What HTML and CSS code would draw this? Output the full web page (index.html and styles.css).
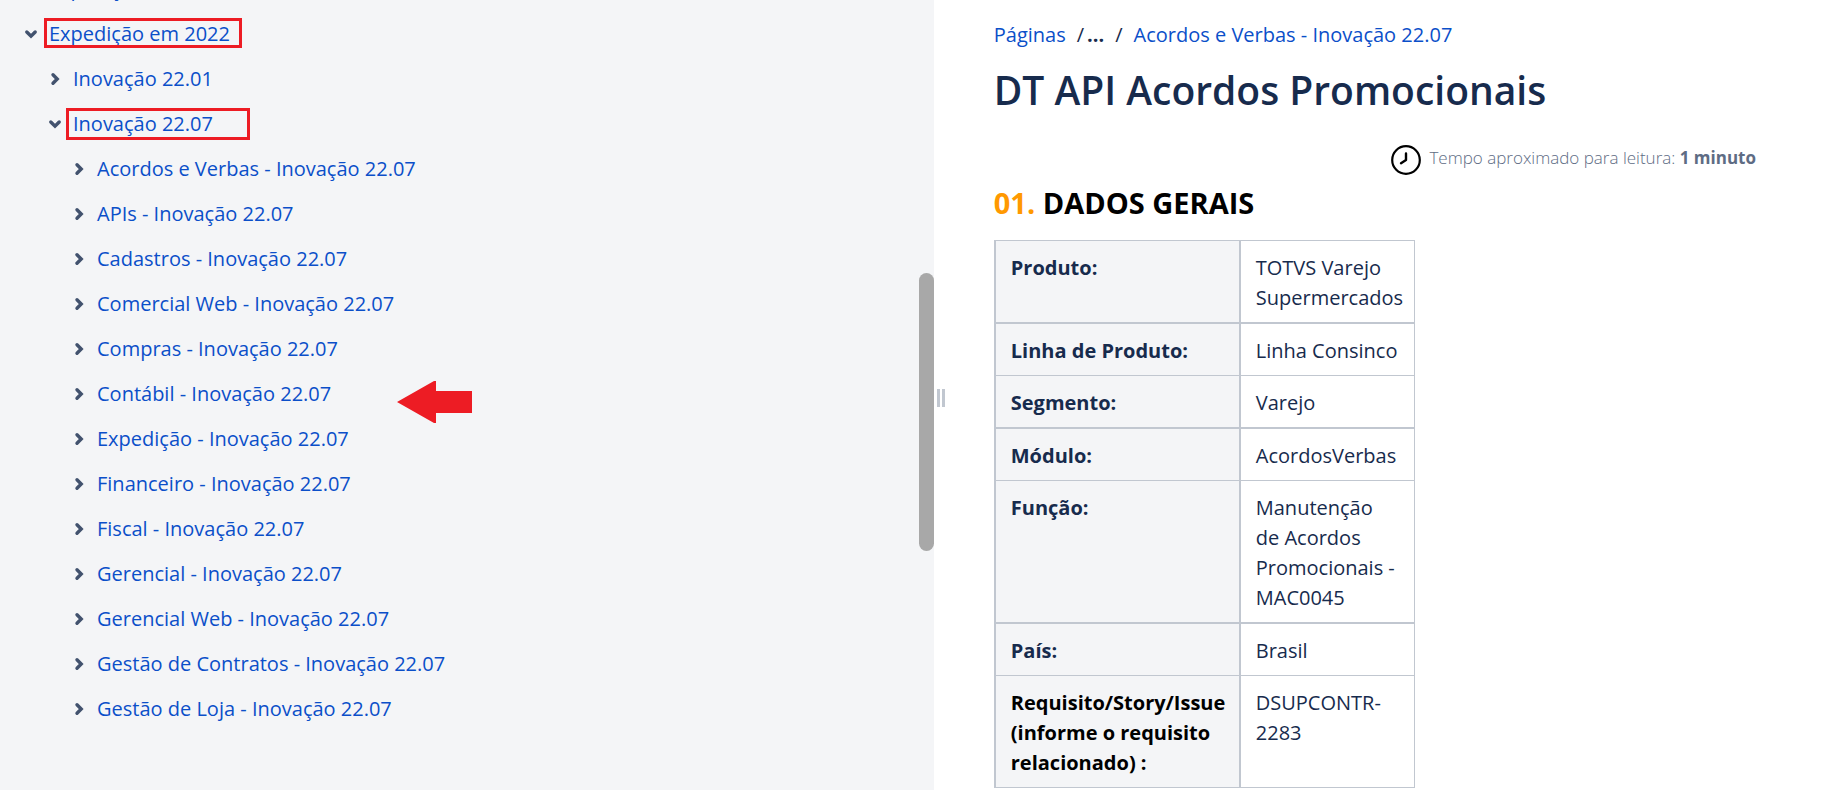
FILE: index.html
```html
<!DOCTYPE html>
<html lang="pt-BR">
<head>
    <meta charset="UTF-8">
    <meta name="viewport" content="width=device-width, initial-scale=1.0">
    <title>DT API Acordos Promocionais</title>
    <link rel="stylesheet" href="styles.css">
</head>
<body>
    <svg class="sprite" aria-hidden="true">
        <symbol id="chevron" viewBox="0 0 14 14">
            <path d="M5 2.8 9.2 7 5 11.2" fill="none" stroke="currentColor" stroke-width="3.4" stroke-linecap="round"/>
        </symbol>
    </svg>

    <nav class="sidebar" aria-label="Árvore de páginas">
        <ul class="tree">
            <li>
                <div class="row"><svg class="chevron"><use href="#chevron"/></svg><a href="#">Expedição em 2021</a></div>
            </li>
            <li>
                <div class="row"><svg class="chevron open"><use href="#chevron"/></svg><a href="#">Expedição em 2022</a><span class="mark mark-year"></span></div>
                <ul>
                    <li>
                        <div class="row"><svg class="chevron"><use href="#chevron"/></svg><a href="#">Inovação 22.01</a></div>
                    </li>
                    <li>
                        <div class="row"><svg class="chevron open"><use href="#chevron"/></svg><a href="#">Inovação 22.07</a><span class="mark mark-release"></span></div>
                        <ul>
                            <li class="row"><svg class="chevron"><use href="#chevron"/></svg><a href="#">Acordos e Verbas - Inovação 22.07</a></li>
                            <li class="row"><svg class="chevron"><use href="#chevron"/></svg><a href="#">APIs - Inovação 22.07</a></li>
                            <li class="row"><svg class="chevron"><use href="#chevron"/></svg><a href="#">Cadastros - Inovação 22.07</a></li>
                            <li class="row"><svg class="chevron"><use href="#chevron"/></svg><a href="#">Comercial Web - Inovação 22.07</a></li>
                            <li class="row"><svg class="chevron"><use href="#chevron"/></svg><a href="#">Compras - Inovação 22.07</a></li>
                            <li class="row">
                                <svg class="chevron"><use href="#chevron"/></svg><a href="#">Contábil - Inovação 22.07</a>
                                <svg class="arrow" viewBox="0 0 75 42"><path d="M0 21 37 0h2v10h36v22H39v10h-2z" fill="#ed1c24"/></svg>
                            </li>
                            <li class="row"><svg class="chevron"><use href="#chevron"/></svg><a href="#">Expedição - Inovação 22.07</a></li>
                            <li class="row"><svg class="chevron"><use href="#chevron"/></svg><a href="#">Financeiro - Inovação 22.07</a></li>
                            <li class="row"><svg class="chevron"><use href="#chevron"/></svg><a href="#">Fiscal - Inovação 22.07</a></li>
                            <li class="row"><svg class="chevron"><use href="#chevron"/></svg><a href="#">Gerencial - Inovação 22.07</a></li>
                            <li class="row"><svg class="chevron"><use href="#chevron"/></svg><a href="#">Gerencial Web - Inovação 22.07</a></li>
                            <li class="row"><svg class="chevron"><use href="#chevron"/></svg><a href="#">Gestão de Contratos - Inovação 22.07</a></li>
                            <li class="row"><svg class="chevron"><use href="#chevron"/></svg><a href="#">Gestão de Loja - Inovação 22.07</a></li>
                        </ul>
                    </li>
                </ul>
            </li>
        </ul>
        <div class="scroll-thumb"></div>
    </nav>

    <div class="splitter"><span class="grip"></span></div>

    <main class="content">
        <nav class="breadcrumbs" aria-label="Trilha">
            <a href="#">Páginas</a>
            <span class="ellipsis">/<b>...</b></span>
            <span>/</span>
            <a href="#">Acordos e Verbas - Inovação 22.07</a>
        </nav>
        <h1>DT API Acordos Promocionais</h1>
        <div class="reading-time">
            <svg class="clock" viewBox="0 0 30 30" fill="none" stroke="#000" stroke-linecap="round" stroke-linejoin="round">
                <circle cx="15" cy="15" r="13.8" stroke-width="2.2"/>
                <path d="M15 8.5V15l-5 3.2" stroke-width="2.4"/>
            </svg>
            <p>Tempo aproximado para leitura: <b>1 minuto</b></p>
        </div>
        <h2><span class="number">01.</span> DADOS GERAIS</h2>
        <table class="details">
            <tr><th scope="row">Produto:</th><td>TOTVS Varejo Supermercados</td></tr>
            <tr><th scope="row">Linha de Produto:</th><td>Linha Consinco</td></tr>
            <tr><th scope="row">Segmento:</th><td>Varejo</td></tr>
            <tr><th scope="row">Módulo:</th><td>AcordosVerbas</td></tr>
            <tr><th scope="row">Função:</th><td>Manutenção de&nbsp;Acordos Promocionais - MAC0045</td></tr>
            <tr><th scope="row">País:</th><td>Brasil</td></tr>
            <tr><th scope="row" class="strong">Requisito/Story/Issue (informe o requisito relacionado) :</th><td>DSUPCONTR-2283</td></tr>
        </table>
    </main>
</body>
</html>
```
FILE: styles.css
```css
* {
    box-sizing: border-box;
}

body {
    margin: 0;
    height: 100vh;
    display: flex;
    overflow: hidden;
    font-family: "Open Sans", "Noto Sans", sans-serif;
    font-size: 20px;
    line-height: 30px;
    color: #172b4d;
    background: #fff;
}

a {
    color: #0b4fc9;
    text-decoration: none;
}

h1, h2, p {
    margin: 0;
}

.sprite {
    position: absolute;
    width: 0;
    height: 0;
}

/* page tree */
.sidebar {
    position: relative;
    flex: 0 0 51.25%;
    overflow: hidden;
    background: #f4f5f7;
}

.tree {
    margin-top: -34px;
}

.tree, .tree ul {
    padding-left: 24px;
    list-style: none;
}

.tree ul {
    margin: 0;
}

.row {
    position: relative;
    display: flex;
    align-items: center;
    gap: 11px;
    height: 45px;
}

.chevron {
    width: 14px;
    height: 14px;
    color: #42526e;
}

.chevron.open {
    transform: rotate(90deg);
}

/* red annotations */
.mark {
    position: absolute;
    border: 3px solid #ed1c24;
}

.mark-year {
    left: 20px;
    top: 7px;
    width: 198px;
    height: 30px;
}

.mark-release {
    left: 18px;
    top: 7px;
    width: 184px;
    height: 32px;
}

.arrow {
    position: absolute;
    left: 325px;
    top: 10px;
    width: 75px;
    height: 42px;
}

.scroll-thumb {
    position: absolute;
    right: 0;
    top: 273px;
    width: 15px;
    height: 278px;
    border-radius: 8px;
    background: #a8a8a8;
}

.splitter {
    flex: 0 0 14px;
    display: flex;
    align-items: center;
    justify-content: center;
    padding-top: 6px;
}

.grip {
    width: 8px;
    height: 18px;
    border: solid #c1c7d0;
    border-width: 0 3px;
}

/* document */
.content {
    flex: 1;
    padding: 20px 66px 0 46px;
}

.breadcrumbs {
    display: flex;
    gap: 11px;
}

.ellipsis b {
    margin-left: 3px;
}

h1 {
    margin-top: 14px;
    font-size: 39px;
    font-weight: 600;
    line-height: 52px;
}

.reading-time {
    display: flex;
    justify-content: flex-end;
    gap: 8px;
    margin-top: 29px;
    font-size: 17px;
    font-weight: 300;
    line-height: 26px;
    color: #5e6c84;
}

.reading-time b {
    font-weight: 700;
}

.clock {
    width: 30px;
    height: 30px;
}

h2 {
    margin-top: 8px;
    color: #000;
    font-size: 29px;
    line-height: 40px;
}

.number {
    color: #ff9900;
}

.details {
    width: 421px;
    margin-top: 17px;
    border-collapse: collapse;
    table-layout: fixed;
}

.details th, .details td {
    padding: 12px 12px 9px 15px;
    border: 1px solid #c1c7d0;
    text-align: left;
    vertical-align: top;
}

.details th {
    width: 245px;
    border-width: 1px 2px;
    background: #f4f5f7;
}

.details tr:nth-child(odd):not(:last-child) > * {
    border-bottom-width: 2px;
}

.details .strong {
    color: #000;
}
```
